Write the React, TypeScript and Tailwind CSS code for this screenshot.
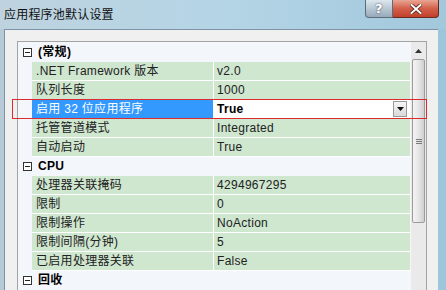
type Row =
  | { kind: 'cat'; label: string }
  | { kind: 'prop'; name: string; value: string; selected?: boolean };

const rows: Row[] = [
  { kind: 'cat', label: '(常规)' },
  { kind: 'prop', name: '.NET Framework 版本', value: 'v2.0' },
  { kind: 'prop', name: '队列长度', value: '1000' },
  { kind: 'prop', name: '启用 32 位应用程序', value: 'True', selected: true },
  { kind: 'prop', name: '托管管道模式', value: 'Integrated' },
  { kind: 'prop', name: '自动启动', value: 'True' },
  { kind: 'cat', label: 'CPU' },
  { kind: 'prop', name: '处理器关联掩码', value: '4294967295' },
  { kind: 'prop', name: '限制', value: '0' },
  { kind: 'prop', name: '限制操作', value: 'NoAction' },
  { kind: 'prop', name: '限制间隔(分钟)', value: '5' },
  { kind: 'prop', name: '已启用处理器关联', value: 'False' },
  { kind: 'cat', label: '回收' },
];

function MinusBox() {
  return (
    <div className="ml-[3px] mr-[6px] flex h-[9px] w-[9px] items-center justify-center border border-[#333] bg-white">
      <div className="h-px w-[5px] bg-[#222]" />
    </div>
  );
}

function CategoryRow({ label }: { label: string }) {
  return (
    <div className="flex h-[19px] items-center border-b border-[#f3f6fb] bg-[#f3f6fb] pl-[2px] pr-0 text-[12px] font-bold text-black">
      <MinusBox />
      <span>{label}</span>
    </div>
  );
}

function PropRow({ name, value, selected }: { name: string; value: string; selected?: boolean }) {
  return (
    <div className="flex h-[19px]">
      <div className="w-[14px] shrink-0 bg-[#f3f6fb]" />
      <div
        className={`flex w-[181px] shrink-0 items-center border-b border-white pl-[4px] text-[12px] ${
          selected ? 'bg-[#3399ff] text-white' : 'bg-[#cfe6cf] text-[#222]'
        }`}
      >
        {name}
      </div>
      <div className="w-px shrink-0 bg-white" />
      <div
        className={`flex flex-1 items-center border-b border-white pl-[3px] text-[12px] ${
          selected ? 'bg-white font-bold text-black' : 'bg-[#cfe6cf] text-[#222]'
        }`}
      >
        <span className="flex-1">{value}</span>
        {selected && (
          <div className="mr-[3px] flex h-[16px] w-[14px] items-center justify-center border border-[#9a9a9a] bg-gradient-to-b from-[#f6f6f6] to-[#d9d9d9]">
            <svg width="7" height="4" viewBox="0 0 7 4">
              <path d="M0 0 H7 L3.5 4 Z" fill="#111" />
            </svg>
          </div>
        )}
      </div>
    </div>
  );
}

function ScrollBar() {
  return (
    <div className="flex w-[16px] shrink-0 flex-col bg-[#eaeaea] border-l border-[#f7f7f7]">
      <div className="flex h-[17px] items-center justify-center">
        <svg width="7" height="4" viewBox="0 0 7 4">
          <path d="M0 4 H7 L3.5 0 Z" fill="#333" />
        </svg>
      </div>
      <div className="mx-px flex h-[164px] items-center justify-center rounded-[2px] border border-[#9b9b9b] bg-gradient-to-r from-[#f4f4f4] via-[#e6e6e6] to-[#cfcfcf]">
        <div className="flex flex-col gap-[1px]">
          <div className="h-px w-[6px] bg-[#7a7a7a]" />
          <div className="h-px w-[6px] bg-[#7a7a7a]" />
          <div className="h-px w-[6px] bg-[#7a7a7a]" />
        </div>
      </div>
      <div className="flex-1" />
    </div>
  );
}

export default function App() {
  return (
    <div className="relative flex h-[290px] w-[446px] flex-col overflow-hidden bg-gradient-to-r from-[#b5cad6] via-[#a9cde0] to-[#9dc6da] font-['Liberation_Sans','Noto_Sans_CJK_SC',sans-serif] tracking-[0.3px]">
      {/* title bar */}
      <div className="flex h-[29px] shrink-0 items-start bg-gradient-to-r from-[#bed3df] via-[#b4d5e6] to-[#a2c8dc]">
        <div className="flex-1 pl-[4px] pt-[6px] font-['Noto_Sans_CJK_SC',sans-serif] text-[12px] leading-[16px] tracking-[0.2px] text-[#111]">
          应用程序池默认设置
        </div>
        <div className="mr-[7px] flex h-[18px]">
          <div className="flex w-[28px] items-center justify-center rounded-bl-[4px] border border-t-0 border-[#5d6c7a] bg-gradient-to-b from-[#dde7ee] via-[#b9c8d4] to-[#97aabb]">
            <span className="font-['DejaVu_Sans',sans-serif] text-[13px] font-bold leading-none text-white [text-shadow:0_0_2px_#334]">
              ?
            </span>
          </div>
          <div className="flex w-[46px] items-center justify-center rounded-br-[4px] border border-l-0 border-t-0 border-[#6b2a20] bg-gradient-to-b from-[#e9a593] via-[#d2604a] to-[#c2402a]">
            <svg width="12" height="10" viewBox="0 0 12 10">
              <path d="M1.5 1 L10.5 9 M10.5 1 L1.5 9" stroke="#4a1a12" strokeWidth="3.4" strokeLinecap="square" />
              <path d="M1.5 1 L10.5 9 M10.5 1 L1.5 9" stroke="#fff" strokeWidth="2" strokeLinecap="square" />
            </svg>
          </div>
        </div>
      </div>

      {/* client area */}
      <div className="ml-[4px] mr-[8px] flex-1 border-l border-t border-[#7e94a6] bg-[#f0f0f0] pl-[12px] pt-[11px]">
        <div className="flex w-[410px] border border-[#a3a3a3] bg-[#f3f6fb]">
          <div className="flex flex-1 flex-col pt-px">
            {rows.map((r, i) =>
              r.kind === 'cat' ? (
                <CategoryRow key={i} label={r.label} />
              ) : (
                <PropRow key={i} name={r.name} value={r.value} selected={r.selected} />
              ),
            )}
          </div>
          <ScrollBar />
        </div>
      </div>

      {/* red annotation box */}
      <div className="absolute left-[12px] top-[99px] h-[20px] w-[415px] border border-[#dc2a2f]" />
    </div>
  );
}
